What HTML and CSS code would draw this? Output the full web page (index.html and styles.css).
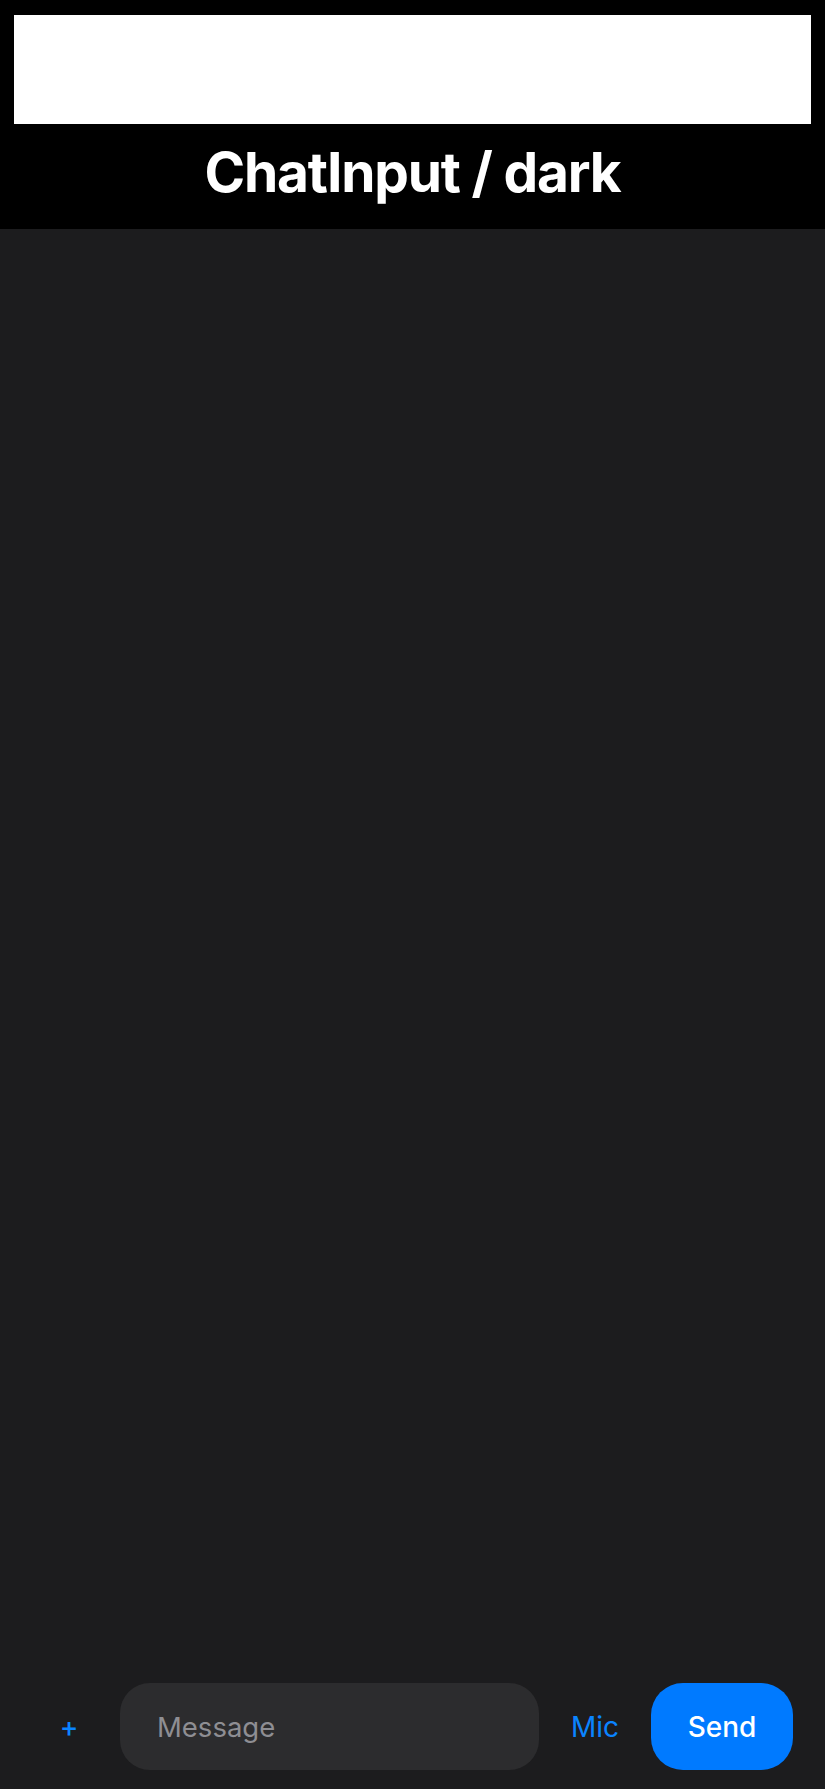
FILE: index.html
```html
<!DOCTYPE html>
<html lang="en">
<head>
    <meta charset="UTF-8">
    <meta name="viewport" content="width=device-width, initial-scale=1.0">
    <title>ChatInput / dark</title>
    <link rel="stylesheet" href="styles.css">
</head>
<body>
    <header class="story-header">
        <div class="preview-strip"></div>
        <h1 class="story-title">ChatInput / dark</h1>
    </header>

    <main class="chat">
        <div class="chat-thread"></div>

        <form class="chat-input" onsubmit="return false">
            <button type="button" class="chat-attach">+</button>
            <input class="chat-field" type="text" placeholder="Message">
            <button type="button" class="chat-mic">Mic</button>
            <button type="submit" class="chat-send">Send</button>
        </form>
    </main>
</body>
</html>
```

FILE: styles.css
```css
* {
    box-sizing: border-box;
}

html,
body {
    margin: 0;
    padding: 0;
    height: 100%;
}

body {
    display: flex;
    flex-direction: column;
    min-height: 100vh;
    background: #1c1c1e;
    font-family: Inter, "Noto Sans", sans-serif;
    color: #fff;
}

.story-header {
    background: #000;
    padding: 15px 14px 24px;
}

.preview-strip {
    height: 109px;
    background: #fff;
}

.story-title {
    margin: 15px 0 0;
    font-size: 55px;
    line-height: 66px;
    font-weight: 700;
    letter-spacing: -1.2px;
    text-align: center;
}

.chat {
    flex: 1;
    display: flex;
    flex-direction: column;
}

.chat-thread {
    flex: 1;
}

.chat-input {
    display: flex;
    align-items: center;
    gap: 14px;
    padding: 0 32px 19px;
}

.chat-input button {
    font-family: inherit;
    border: none;
    background: none;
    cursor: pointer;
}

.chat-attach {
    width: 74px;
    height: 87px;
    padding: 0;
    color: #0a84ff;
    font-size: 28px;
    font-weight: 500;
}

.chat-field {
    flex: 1;
    min-width: 0;
    height: 87px;
    padding: 0 37px;
    border: none;
    border-radius: 30px;
    background: #2c2c2e;
    color: #fff;
    font-family: inherit;
    font-size: 27.5px;
    outline: none;
}

.chat-field::placeholder {
    color: #8e8e93;
}

.chat-mic {
    padding: 0 18px;
    height: 87px;
    color: #0a84ff;
    font-size: 28px;
}

.chat-input .chat-send {
    width: 142px;
    height: 87px;
    border-radius: 32px;
    background: #007aff;
    color: #fff;
    font-size: 28px;
    font-weight: 500;
}
```
